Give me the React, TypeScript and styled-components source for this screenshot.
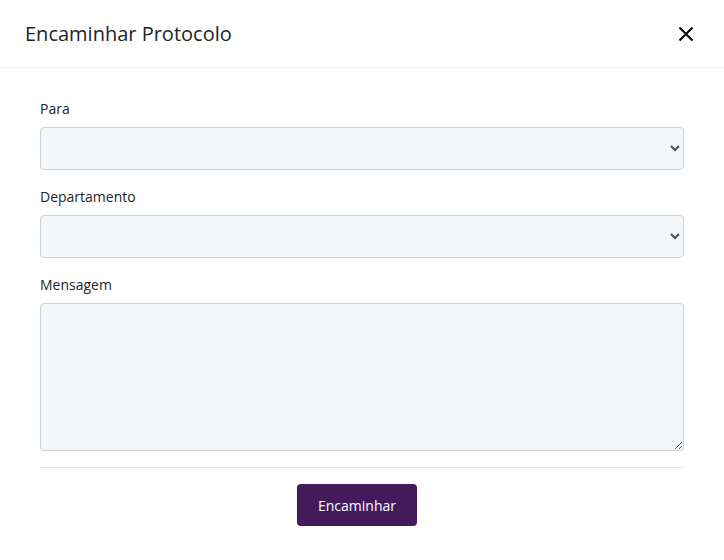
import React from "react";
import styled, { createGlobalStyle } from "styled-components";

const Global = createGlobalStyle`
  html, body { margin: 0; padding: 0; background: #fff; }
  body { font-family: "Open Sans", "Noto Sans", sans-serif; color: #212529; }
  * { box-sizing: border-box; }
`;

const Dialog = styled.div`
  width: 724px;
  background: #fff;
`;

const Header = styled.div`
  height: 68px;
  display: flex;
  align-items: center;
  justify-content: space-between;
  padding: 0 26px 0 25px;
  border-bottom: 1px solid #eceef0;
`;

const Title = styled.h5`
  margin: 0;
  font-size: 20px;
  font-weight: 400;
  color: #212529;
  line-height: 1.2;
`;

const CloseButton = styled.button`
  border: 0;
  background: transparent;
  padding: 0;
  width: 24px;
  height: 24px;
  display: flex;
  align-items: center;
  justify-content: center;
  cursor: pointer;
  color: #000;
`;

const Body = styled.form`
  padding: 30px 40px 16px;
  display: flex;
  flex-direction: column;
`;

const Field = styled.div`
  display: flex;
  flex-direction: column;
  margin-bottom: 16px;
`;

const Label = styled.label`
  font-size: 14px;
  line-height: 21px;
  color: #212529;
  margin-bottom: 8px;
`;

const Select = styled.select`
  height: 43px;
  width: 100%;
  background-color: #f3f6f9;
  border: 1px solid #ced4da;
  border-radius: 4px;
  font-family: inherit;
  font-size: 14px;
  color: #495057;
  padding: 0 8px;
  outline: none;
`;

const TextArea = styled.textarea`
  height: 148px;
  width: 100%;
  background-color: #f3f6f9;
  border: 1px solid #ced4da;
  border-radius: 4px;
  font-family: inherit;
  font-size: 14px;
  padding: 8px 12px;
  resize: vertical;
  outline: none;
`;

const Divider = styled.hr`
  margin: 0 0 16px;
  border: 0;
  border-top: 1px solid #e3e5e8;
`;

const Actions = styled.div`
  display: flex;
  justify-content: center;
  padding-right: 10px;
`;

const PrimaryButton = styled.button`
  width: 120px;
  height: 42px;
  background: #431b5c;
  color: #fff;
  border: 0;
  border-radius: 4px;
  font-family: inherit;
  font-size: 14px;
  cursor: pointer;
`;

export default function App() {
  return (
    <>
      <Global />
      <Dialog>
        <Header>
          <Title>Encaminhar Protocolo</Title>
          <CloseButton type="button" aria-label="Fechar">
            <svg width="16" height="16" viewBox="0 0 16 16">
              <path d="M1.5 1.5 L14.5 14.5 M14.5 1.5 L1.5 14.5" stroke="#000" strokeWidth="2" fill="none" />
            </svg>
          </CloseButton>
        </Header>
        <Body onSubmit={(e) => e.preventDefault()}>
          <Field>
            <Label htmlFor="para">Para</Label>
            <Select id="para" defaultValue="">
              <option value=""></option>
            </Select>
          </Field>
          <Field>
            <Label htmlFor="dep">Departamento</Label>
            <Select id="dep" defaultValue="">
              <option value=""></option>
            </Select>
          </Field>
          <Field>
            <Label htmlFor="msg">Mensagem</Label>
            <TextArea id="msg" />
          </Field>
          <Divider />
          <Actions>
            <PrimaryButton type="submit">Encaminhar</PrimaryButton>
          </Actions>
        </Body>
      </Dialog>
    </>
  );
}
